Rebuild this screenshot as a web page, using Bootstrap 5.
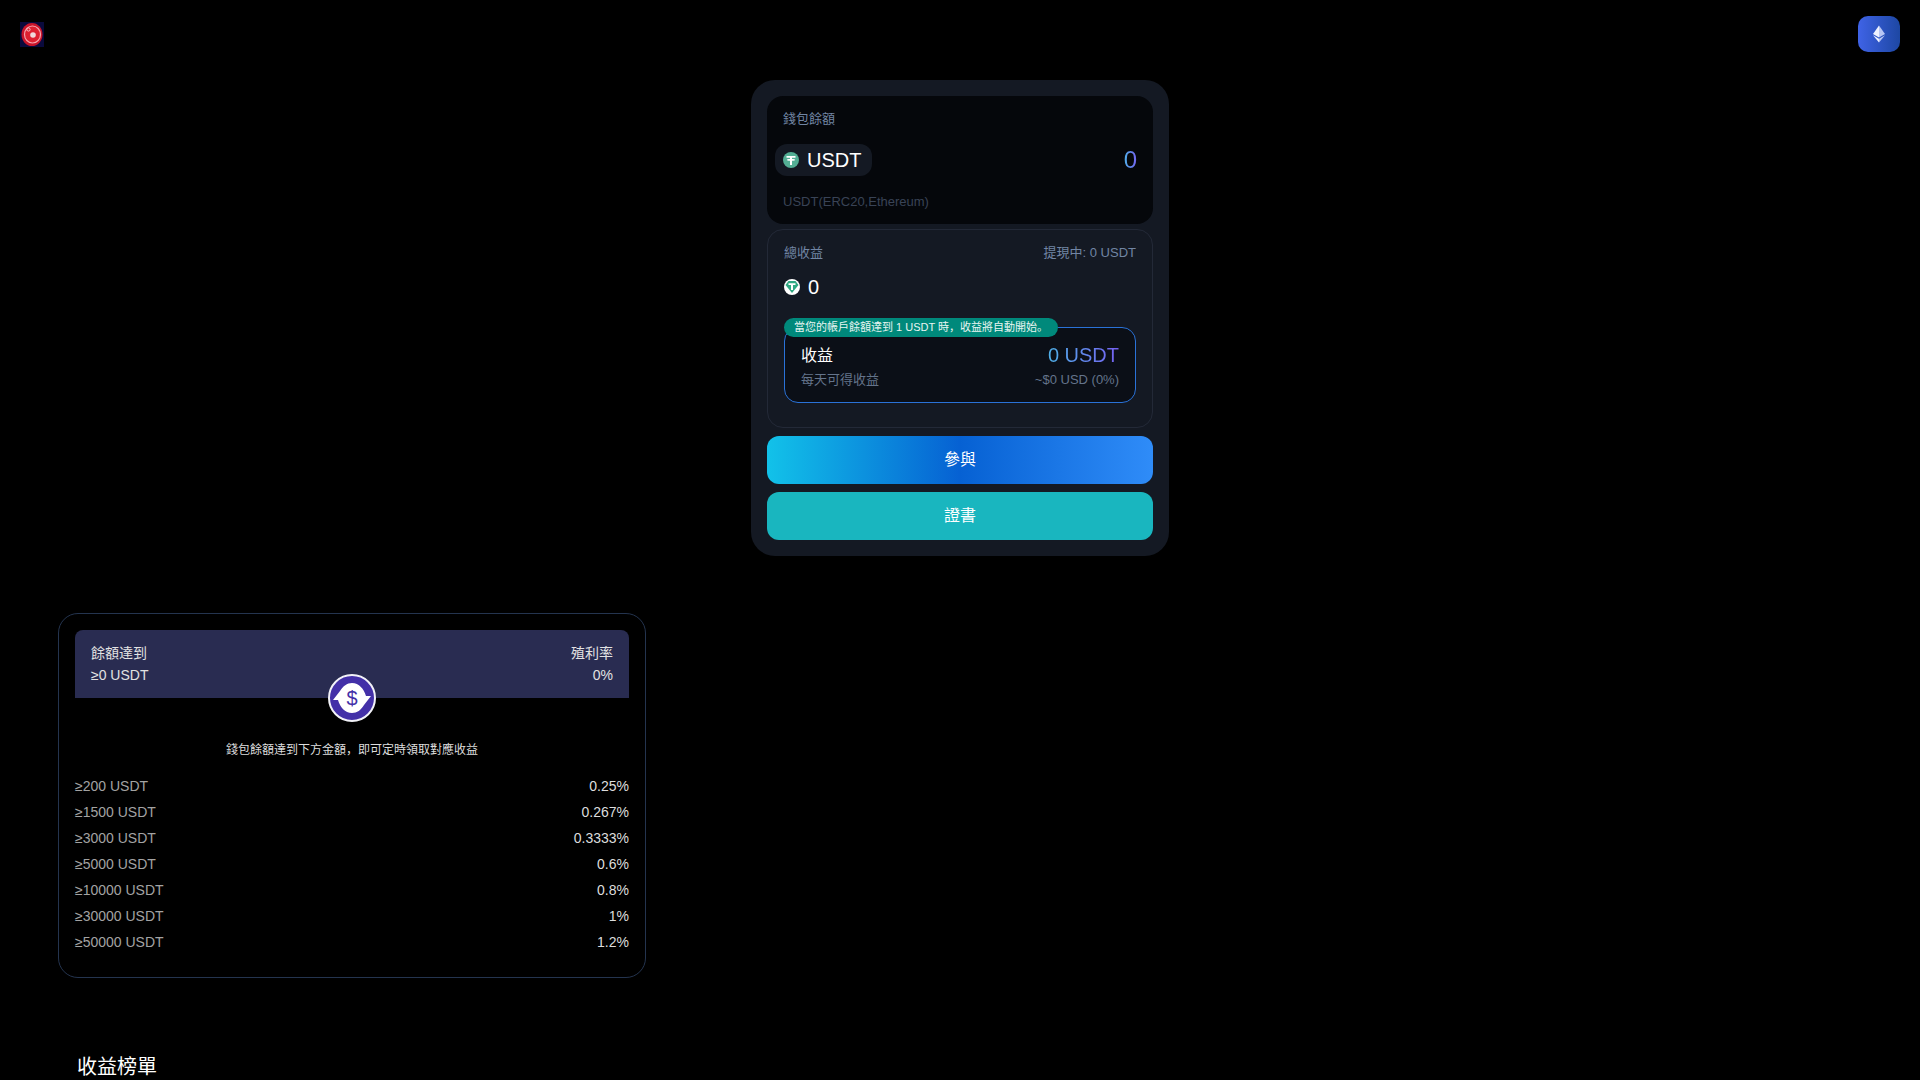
<!doctype html>
<html lang="en">

<head>
    <meta charset="utf-8" />
    <meta name="viewport" content="width=device-width, initial-scale=1" />
    <title>USDT</title>
    <link href="https://cdn.jsdelivr.net/npm/bootstrap@5.3.5/dist/css/bootstrap.min.css" rel="stylesheet" />
    <style>
        body {
            background-color: #000;
            color: #fff;
            font-family: "Liberation Sans", "Noto Sans CJK SC", sans-serif;
        }

        .top-bar {
            height: 68px;
            padding: 16px 20px;
        }

        .chain-btn {
            width: 42px;
            height: 36px;
            border: 0;
            padding: 0;
            border-radius: 10px;
            background: linear-gradient(90deg, #3f63e6, #1d47a3);
        }

        .stake-panel {
            width: 418px;
            margin: 12px auto 0;
            padding: 16px;
            border-radius: 24px;
            background-color: #141923;
        }

        .wallet-box {
            height: 128px;
            padding: 13px 16px 0;
            border-radius: 16px;
            background-color: #05070b;
            margin-bottom: 5px;
        }

        .label-text {
            font-size: 13px;
            line-height: 20px;
            color: #64748b;
        }

        .wallet-label {
            color: #7185a3;
        }

        .token-pill {
            width: 97px;
            height: 32px;
            margin: 15px 0 17px -8px;
            padding-left: 8px;
            border-radius: 12px;
            background-color: #141923;
            font-size: 20px;
            gap: 8px;
        }

        .gradient-num {
            background: linear-gradient(90deg, #4fb0e8, #7560f2);
            -webkit-background-clip: text;
            background-clip: text;
            color: transparent;
        }

        .balance-num {
            font-size: 24px;
            line-height: 28px;
            margin-top: -2px;
        }

        .chain-note {
            font-size: 13px;
            line-height: 18px;
            color: #394356;
        }

        .earn-box {
            height: 199px;
            padding: 13px 16px 0;
            border: 1px solid #232937;
            border-radius: 16px;
            margin-bottom: 8px;
        }

        .earn-amount {
            height: 36px;
            margin-top: 6px;
            font-size: 20px;
            gap: 8px;
        }

        .notice-wrap {
            height: 76px;
            margin-top: 22px;
            padding: 16px 16px 0;
            border: 1px solid #2a72d8;
            border-radius: 14px;
            background-color: #0b0f17;
            position: relative;
        }

        .notice-pill {
            position: absolute;
            left: -1px;
            top: -10px;
            width: 274px;
            height: 19px;
            padding-left: 10px;
            border-radius: 10px;
            background-color: #00897b;
            font-size: 11px;
            line-height: 18px;
            color: #e8f5f2;
            white-space: nowrap;
        }

        .profit-title {
            font-size: 16px;
            line-height: 24px;
        }

        .profit-num {
            font-size: 20px;
            line-height: 24px;
            margin-top: -1px;
        }

        .profit-sub {
            margin-top: 3px;
            font-size: 13px;
            line-height: 18px;
            color: #64748b;
        }

        .profit-usd {
            font-size: 13px;
        }

        .action-btn {
            display: block;
            width: 100%;
            height: 48px;
            border: 0;
            border-radius: 12px;
            color: #fff;
            font-size: 16px;
        }

        .join-btn {
            margin-bottom: 8px;
            background: linear-gradient(90deg, #12c2e9, #0661d3 50%, #2f8cf8);
        }

        .cert-btn {
            background-color: #19b6bf;
        }

        .rate-panel {
            width: 588px;
            height: 365px;
            margin: 57px 0 0 58px;
            padding: 16px 16px 0;
            border: 1px solid #24344f;
            border-radius: 20px;
        }

        .rate-head {
            height: 68px;
            padding: 12px 16px 0;
            border-radius: 8px 8px 0 0;
            background-color: #292c51;
            font-size: 14px;
            line-height: 22px;
            color: #e2e2e2;
            position: relative;
        }

        .swap-icon {
            position: absolute;
            left: 50%;
            bottom: -24px;
            margin-left: -24px;
        }

        .rate-desc {
            margin-top: 41px;
            margin-bottom: 12px;
            font-size: 12px;
            line-height: 22px;
            text-align: center;
            color: #ddd;
        }

        .rate-row {
            height: 26px;
            font-size: 14px;
            color: #ddd;
        }

        .rate-row span:first-child {
            color: #a3a3a3;
        }

        .board-title {
            margin: 75px 0 0 77px;
            font-size: 20px;
            line-height: 28px;
            font-weight: 400;
        }
    </style>
</head>

<body>
    <div class="top-bar d-flex justify-content-between align-items-center">
        <svg width="24" height="25" viewBox="0 0 24 25">
            <rect width="24" height="25" fill="#0a0a3c" />
            <ellipse cx="12" cy="12.5" rx="10.5" ry="11.5" fill="#c9142a" />
            <ellipse cx="12.5" cy="12.5" rx="8" ry="8.5" fill="#de2030" stroke="#f6a3ac" stroke-width="1.2" />
            <circle cx="13" cy="13" r="2.8" fill="#f0d8da" />
            <circle cx="8.5" cy="7.5" r="1.6" fill="#de2030" stroke="#f6c3c8" />
        </svg>
        <button class="chain-btn d-flex align-items-center justify-content-center" type="button">
            <svg width="12" height="18" viewBox="0 0 14 20">
                <path d="M7 0 L14 10 L7 14 Z" fill="#b7c6f5" />
                <path d="M7 0 L0 10 L7 14 Z" fill="#eef2ff" />
                <path d="M7 15.5 L14 11.5 L7 20 Z" fill="#b7c6f5" />
                <path d="M7 15.5 L0 11.5 L7 20 Z" fill="#eef2ff" />
            </svg>
        </button>
    </div>

    <div class="stake-panel">
        <div class="wallet-box">
            <div class="label-text wallet-label">錢包餘額</div>
            <div class="d-flex justify-content-between align-items-center">
                <div class="token-pill d-flex align-items-center">
                    <svg width="16" height="16" viewBox="0 0 16 16">
                        <circle cx="8" cy="8" r="8" fill="#53ae94" />
                        <path d="M3.5 4 H12.5 V5.8 H9 V7 C10.8 7.1 12.2 7.4 12.2 7.9 C12.2 8.4 10.8 8.7 9 8.8 V13 H7 V8.8 C5.2 8.7 3.8 8.4 3.8 7.9 C3.8 7.4 5.2 7.1 7 7 V5.8 H3.5 Z" fill="#fff" />
                    </svg>
                    <span>USDT</span>
                </div>
                <span class="balance-num gradient-num">0</span>
            </div>
            <div class="chain-note">USDT(ERC20,Ethereum)</div>
        </div>

        <div class="earn-box">
            <div class="d-flex justify-content-between align-items-center">
                <span class="label-text wallet-label">總收益</span>
                <span class="label-text wallet-label profit-usd">提現中: 0 USDT</span>
            </div>
            <div class="earn-amount d-flex align-items-center">
                <svg width="16" height="16" viewBox="0 0 16 16">
                    <circle cx="8" cy="8" r="8" fill="#fff" />
                    <path d="M4.5 2 H11.5 L14.5 6 L8 14 L1.5 6 Z" fill="#2fa882" />
                    <path d="M4.5 4.2 H11.5 V5.9 H9 V11 H7 V5.9 H4.5 Z" fill="#fff" />
                </svg>
                <span>0</span>
            </div>
            <div class="notice-wrap">
                <div class="notice-pill">當您的帳戶餘額達到 1 USDT 時，收益將自動開始。</div>
                <div class="d-flex justify-content-between">
                    <span class="profit-title">收益</span>
                    <span class="profit-num gradient-num">0 USDT</span>
                </div>
                <div class="profit-sub d-flex justify-content-between align-items-center">
                    <span>每天可得收益</span>
                    <span class="profit-usd">~$0 USD (0%)</span>
                </div>
            </div>
        </div>

        <button class="action-btn join-btn" type="button">參與</button>
        <button class="action-btn cert-btn" type="button">證書</button>
    </div>

    <div class="rate-panel">
        <div class="rate-head">
            <div class="d-flex justify-content-between"><span>餘額達到</span><span>殖利率</span></div>
            <div class="d-flex justify-content-between"><span>≥0 USDT</span><span>0%</span></div>
            <svg class="swap-icon" width="48" height="48" viewBox="0 0 48 48">
                <circle cx="24" cy="24" r="23" fill="#4330a8" stroke="#f2f2f8" stroke-width="2" />
                <path d="M24 9 C31 9 36 15 38 22 L43 22 L36 31 C33 36 29 39 24 39 C17 39 12 33 10 26 L5 26 L12 17 C15 12 19 9 24 9 Z" fill="#fff" />
                <text x="24" y="31" text-anchor="middle" font-size="20" font-family="Liberation Sans, sans-serif" fill="#4330a8">$</text>
            </svg>
        </div>
        <div class="rate-desc">錢包餘額達到下方金額，即可定時領取對應收益</div>
        <div id="rates"></div>
    </div>

    <h2 class="board-title">收益榜單</h2>

    <script>
        const rates = [
            ["≥200 USDT", "0.25%"],
            ["≥1500 USDT", "0.267%"],
            ["≥3000 USDT", "0.3333%"],
            ["≥5000 USDT", "0.6%"],
            ["≥10000 USDT", "0.8%"],
            ["≥30000 USDT", "1%"],
            ["≥50000 USDT", "1.2%"]
        ];

        const ratesBox = document.getElementById("rates");
        rates.forEach((rate) => {
            ratesBox.innerHTML += `
          <div class="rate-row d-flex justify-content-between align-items-center">
            <span>${rate[0]}</span><span>${rate[1]}</span>
          </div>`;
        });
    </script>

    <script src="https://cdn.jsdelivr.net/npm/bootstrap@5.3.5/dist/js/bootstrap.bundle.min.js"></script>
</body>

</html>
